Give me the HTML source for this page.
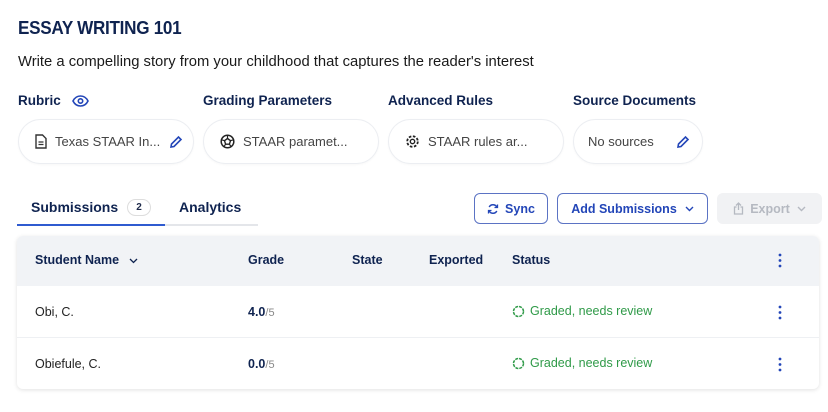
<!DOCTYPE html>
<html><head><style>
*{box-sizing:border-box;margin:0;padding:0}
body{width:828px;height:412px;background:#fff;font-family:"Liberation Sans",sans-serif;color:#1e2a4a;position:relative;overflow:hidden}
.a{position:absolute}
h1{position:absolute;left:18px;top:18px;font-size:18px;font-weight:800;color:#0f2350;letter-spacing:-0.3px;transform:scaleX(0.95);transform-origin:left}
.sub{left:18px;top:54px;font-size:14.8px;color:#1a1a1a}
.lbl{top:93px;font-size:13.5px;font-weight:700;color:#0f2350}
.pill{top:119px;height:45px;border:1px solid #eceef2;border-radius:23px;display:flex;align-items:center;padding-left:16px;font-size:13px;color:#444;box-shadow:0 1px 2px rgba(0,0,0,.03)}
.pill svg{margin-right:8px}
.tab{top:199px;font-size:14px;font-weight:700;color:#0f2350}
.btn{top:193px;height:31px;border:1px solid #5b73c4;border-radius:6px;display:flex;align-items:center;justify-content:center;font-size:12.5px;font-weight:700;color:#2346b8}
.tbl{left:17px;top:236px;width:802px;height:153px;border-radius:6px;box-shadow:0 1px 4px rgba(0,0,0,.12);overflow:hidden;background:#fff}
.hd{position:absolute;left:0;top:0;width:100%;height:50px;background:#f1f3f6}
.th{font-size:12.5px;font-weight:700;color:#0f2350;top:17px}
.td{font-size:12.5px;color:#222}
.st{font-size:12.5px;color:#2f9a48;display:flex;align-items:center}
</style></head><body>
<h1>ESSAY WRITING 101</h1>
<div class="a sub">Write a compelling story from your childhood that captures the reader's interest</div>

<div class="a lbl" style="left:18px">Rubric</div>
<svg class="a" style="left:72px;top:95px" width="17" height="12" viewBox="0 0 17 12"><path d="M1 6C3 2 6 1 8.5 1S14 2 16 6C14 10 11 11 8.5 11S3 10 1 6Z" fill="none" stroke="#2346b8" stroke-width="1.6"/><circle cx="8.5" cy="6" r="2.2" fill="none" stroke="#2346b8" stroke-width="1.6"/></svg>
<div class="a lbl" style="left:203px">Grading Parameters</div>
<div class="a lbl" style="left:388px">Advanced Rules</div>
<div class="a lbl" style="left:573px">Source Documents</div>

<div class="a pill" style="left:18px;width:176px"><svg width="12" height="15" viewBox="0 0 12 15"><path d="M1 1H7.5L11 4.5V14H1Z" fill="none" stroke="#333" stroke-width="1.4"/><path d="M3.5 8H8.5M3.5 10.5H8.5" stroke="#333" stroke-width="1.2"/></svg>Texas STAAR In...<svg style="margin-left:9px" width="14" height="14" viewBox="0 0 14 14"><path d="M2 12L2.5 9L9.5 2L12 4.5L5 11.5Z" fill="none" stroke="#2346b8" stroke-width="1.6"/></svg></div>
<div class="a pill" style="left:203px;width:176px"><svg width="15" height="15" viewBox="0 0 15 15"><circle cx="7.5" cy="7.5" r="6.3" fill="none" stroke="#222" stroke-width="1.5"/><path d="M7.5 4.5L10.5 6.7L9.4 10.2H5.6L4.5 6.7Z" fill="none" stroke="#222" stroke-width="1.4"/><path d="M7.5 4.5V1.5M10.5 6.7L13.5 5.8M9.4 10.2L11.2 12.8M5.6 10.2L3.8 12.8M4.5 6.7L1.5 5.8" stroke="#222" stroke-width="1.2"/></svg>STAAR paramet...</div>
<div class="a pill" style="left:388px;width:176px"><svg width="15" height="15" viewBox="0 0 15 15"><circle cx="7.5" cy="7.5" r="2.2" fill="none" stroke="#222" stroke-width="1.4"/><circle cx="7.5" cy="7.5" r="5.3" fill="none" stroke="#222" stroke-width="1.8" stroke-dasharray="2.6 1.6"/></svg>STAAR rules ar...</div>
<div class="a pill" style="left:573px;width:130px;padding-left:14px">No sources<svg style="margin-left:22px" width="14" height="14" viewBox="0 0 14 14"><path d="M2 12L2.5 9L9.5 2L12 4.5L5 11.5Z" fill="none" stroke="#2346b8" stroke-width="1.6"/></svg></div>

<div class="a tab" style="left:31px">Submissions</div>
<div class="a" style="left:127px;top:199px;width:24px;height:17px;border:1px solid #ddd;border-radius:9px;font-size:10px;font-weight:700;text-align:center;line-height:15px">2</div>
<div class="a tab" style="left:179px">Analytics</div>
<div class="a" style="left:17px;top:224px;width:241px;height:2px;background:#e4e6ea"></div>
<div class="a" style="left:17px;top:224px;width:148px;height:2px;background:#2f5bd0"></div>

<div class="a btn" style="left:474px;width:74px"><svg width="12" height="12" viewBox="0 0 12 12" style="margin-right:6px"><path d="M10 4.5A4.3 4.3 0 0 0 2.2 4M2 7.5A4.3 4.3 0 0 0 9.8 8" fill="none" stroke="#2346b8" stroke-width="1.5"/><path d="M10.5 1.5V4.5H7.5M1.5 10.5V7.5H4.5" fill="none" stroke="#2346b8" stroke-width="1.3"/></svg>Sync</div>
<div class="a btn" style="left:557px;width:151px">Add Submissions <svg style="margin-left:8px" width="9" height="6" viewBox="0 0 9 6"><path d="M1 1L4.5 4.5L8 1" fill="none" stroke="#2346b8" stroke-width="1.4"/></svg></div>
<div class="a btn" style="left:717px;width:105px;border-color:#f1f2f4;background:#f1f2f4;color:#b5b9c1"><svg width="11" height="13" viewBox="0 0 11 13" style="margin-right:6px"><path d="M3.5 5H1.5V12H9.5V5H7.5M5.5 8V1M3 3.5L5.5 1L8 3.5" fill="none" stroke="#b5b9c1" stroke-width="1.3"/></svg>Export <svg style="margin-left:7px" width="9" height="6" viewBox="0 0 9 6"><path d="M1 1L4.5 4.5L8 1" fill="none" stroke="#b5b9c1" stroke-width="1.4"/></svg></div>

<div class="a tbl">
<div class="hd"></div>
<div class="a th" style="left:18px">Student Name <svg style="margin-left:6px" width="9" height="6" viewBox="0 0 9 6"><path d="M1 1L4.5 4.5L8 1" fill="none" stroke="#0f2350" stroke-width="1.3"/></svg></div>
<div class="a th" style="left:231px">Grade</div>
<div class="a th" style="left:335px">State</div>
<div class="a th" style="left:412px">Exported</div>
<div class="a th" style="left:495px">Status</div>
<svg class="a" style="left:761px;top:17px" width="4" height="15" viewBox="0 0 4 15"><circle cx="2" cy="2" r="1.4" fill="#2346b8"/><circle cx="2" cy="7.5" r="1.4" fill="#2346b8"/><circle cx="2" cy="13" r="1.4" fill="#2346b8"/></svg>
<div class="a" style="left:0;top:101px;width:100%;height:1px;background:#eef0f3"></div>
<div class="a td" style="left:18px;top:69px">Obi, C.</div>
<div class="a td" style="left:231px;top:69px"><b style="color:#0f2350">4.0</b><span style="color:#888;font-size:11px">/5</span></div>
<div class="a st" style="left:495px;top:68px"><svg width="13" height="13" viewBox="0 0 13 13" style="margin-right:5px"><circle cx="6.5" cy="6.5" r="5" fill="none" stroke="#2f9a48" stroke-width="1.5" stroke-dasharray="3 1"/></svg>Graded, needs review</div>
<svg class="a" style="left:761px;top:69px" width="4" height="15" viewBox="0 0 4 15"><circle cx="2" cy="2" r="1.4" fill="#2346b8"/><circle cx="2" cy="7.5" r="1.4" fill="#2346b8"/><circle cx="2" cy="13" r="1.4" fill="#2346b8"/></svg>
<div class="a td" style="left:18px;top:121px">Obiefule, C.</div>
<div class="a td" style="left:231px;top:121px"><b style="color:#0f2350">0.0</b><span style="color:#888;font-size:11px">/5</span></div>
<div class="a st" style="left:495px;top:120px"><svg width="13" height="13" viewBox="0 0 13 13" style="margin-right:5px"><circle cx="6.5" cy="6.5" r="5" fill="none" stroke="#2f9a48" stroke-width="1.5" stroke-dasharray="3 1"/></svg>Graded, needs review</div>
<svg class="a" style="left:761px;top:121px" width="4" height="15" viewBox="0 0 4 15"><circle cx="2" cy="2" r="1.4" fill="#2346b8"/><circle cx="2" cy="7.5" r="1.4" fill="#2346b8"/><circle cx="2" cy="13" r="1.4" fill="#2346b8"/></svg>
</div>
</body></html>
